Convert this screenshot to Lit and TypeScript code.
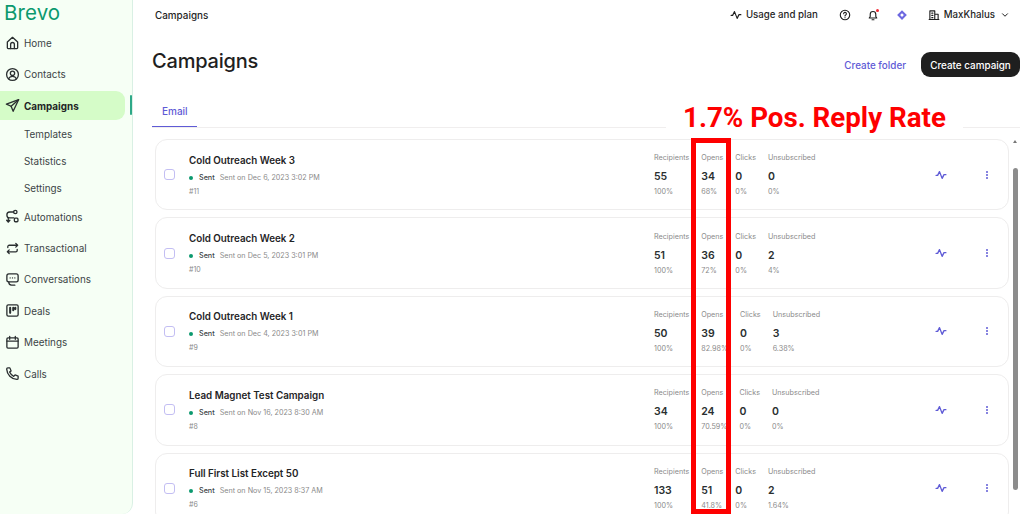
import {html, css, LitElement, svg} from 'lit';
import {customElement} from 'lit/decorators.js';

const NAV_ICONS = {
  home: svg`<path d="M2.500 7.500 8 2.500l5.500 5v6.200a.8.8 0 0 1-.8.8H3.300a.8.8 0 0 1-.8-.8z"/><path d="M6 14.500V10a2 2 0 0 1 4 0v4.500"/>`,
  contacts: svg`<circle cx="8" cy="8" r="6.300"/><circle cx="8" cy="6.600" r="2.300"/><path d="M3.800 12.600c.8-1.800 2.400-2.700 4.200-2.700s3.400.9 4.200 2.700"/>`,
  campaigns: svg`<path d="M14.500 1.800 1.500 6.600l5 2.200 2.200 5.400z"/><path d="M14.500 1.800 6.500 8.800"/>`,
  automations: svg`<circle cx="11" cy="3.200" r="1.800"/><rect x="10" y="9.800" width="3.800" height="3.800" rx="1"/><path d="M9.200 3.200H5a3.100 3.100 0 0 0-3 3.100c0 1.700 1.300 3.200 3 3.200h4.500"/><path d="M3.500 14V9.500M1.800 12 3.500 14l1.700-2"/>`,
  transactional: svg`<path d="M3 7V6a1.500 1.500 0 0 1 1.500-1.500h9M11.500 2.500l2 2-2 2"/><path d="M13 9v1a1.500 1.500 0 0 1-1.500 1.500h-9M4.500 9.500l-2 2 2 2"/>`,
  conversations: svg`<path d="M2 4a2 2 0 0 1 2-2h8a2 2 0 0 1 2 2v4.500a2 2 0 0 1-2 2H4a2 2 0 0 1-2-2z"/><path d="M4 10.500c0 2.200 1 3.500 3 3.500h3.500"/><path d="M5.500 6.300h.01M8 6.300h.01M10.500 6.300h.01"/>`,
  deals: svg`<rect x="2" y="2" width="12" height="12" rx="1.500"/><path d="M5.500 5v5.500M8.800 5v2.800M11 5v1.500" stroke-width="2.200"/>`,
  meetings: svg`<rect x="2" y="3" width="12" height="11" rx="1.200"/><path d="M2 6.500h12M5 1.500v3M11 1.500v3"/>`,
  calls: svg`<path d="M3 2h2.200l1.300 3.200-1.600 1.300c.8 1.900 2.300 3.400 4.400 4.500l1.400-1.600 3.300 1.400V13c0 .8-.6 1.300-1.400 1.300C6.700 14 2.200 9.300 1.800 3.300 1.800 2.600 2.300 2 3 2z"/>`,
};

type NavKey = keyof typeof NAV_ICONS;

const NAV: {label: string; icon: NavKey; active?: boolean; children?: string[]}[] = [
  {label: 'Home', icon: 'home'},
  {label: 'Contacts', icon: 'contacts'},
  {label: 'Campaigns', icon: 'campaigns', active: true, children: ['Templates', 'Statistics', 'Settings']},
  {label: 'Automations', icon: 'automations'},
  {label: 'Transactional', icon: 'transactional'},
  {label: 'Conversations', icon: 'conversations'},
  {label: 'Deals', icon: 'deals'},
  {label: 'Meetings', icon: 'meetings'},
  {label: 'Calls', icon: 'calls'},
];

const CAMPAIGNS = [
  {name: 'Cold Outreach Week 3', date: 'Sent on Dec 6, 2023 3:02 PM', id: '#11',
    stats: [['55', '100%'], ['34', '68%'], ['0', '0%'], ['0', '0%']]},
  {name: 'Cold Outreach Week 2', date: 'Sent on Dec 5, 2023 3:01 PM', id: '#10',
    stats: [['51', '100%'], ['36', '72%'], ['0', '0%'], ['2', '4%']]},
  {name: 'Cold Outreach Week 1', date: 'Sent on Dec 4, 2023 3:01 PM', id: '#9',
    stats: [['50', '100%'], ['39', '82.98%'], ['0', '0%'], ['3', '6.38%']]},
  {name: 'Lead Magnet Test Campaign', date: 'Sent on Nov 16, 2023 8:30 AM', id: '#8',
    stats: [['34', '100%'], ['24', '70.59%'], ['0', '0%'], ['0', '0%']]},
  {name: 'Full First List Except 50', date: 'Sent on Nov 15, 2023 8:37 AM', id: '#6',
    stats: [['133', '100%'], ['51', '41.8%'], ['0', '0%'], ['2', '1.64%']]},
];

const STAT_LABELS = ['Recipients', 'Opens', 'Clicks', 'Unsubscribed'];

const pulse = svg`<path d="M1.500 8.500h2L6 3.500l3.500 9 2.500-5h2.500"/>`;

@customElement('app-root')
export class AppRoot extends LitElement {
  static styles = css`
    :host {
      display: block;
      width: 1024px;
      height: 514px;
      overflow: hidden;
      position: relative;
      background: #fff;
      font-family: Inter, "Liberation Sans", sans-serif;
      color: #1f1f1f;
    }
    svg {
      display: block;
      fill: none;
      stroke: currentColor;
      stroke-linecap: round;
      stroke-linejoin: round;
    }
    .layout {
      display: flex;
      height: 514px;
    }

    /* sidebar */
    .sidebar {
      box-sizing: border-box;
      flex: 0 0 133px;
      height: 514px;
      background: #f6fff5;
      border-right: 1px solid #d9f0e4;
      border-bottom-right-radius: 11px;
      padding-right: 7px;
    }
    .logo {
      box-sizing: border-box;
      height: 27px;
      padding: 0 0 0 4px;
      font-size: 20.500px;
      line-height: 25px;
      letter-spacing: 0.1px;
      color: #0b996e;
    }
    .nav-row {
      position: relative;
      display: flex;
      align-items: center;
      gap: 4px;
      height: 31.400px;
      padding-left: 5px;
      font-size: 9.900px;
      color: #3c4446;
    }
    .nav-row svg {
      width: 15px;
      height: 15px;
      stroke-width: 1.400;
      color: #2a2f30;
    }
    .nav-row.active {
      background: #d5fcc8;
      border-radius: 0 9px 9px 0;
      font-weight: 700;
      color: #1f2426;
      height: 28.500px;
      margin: 1.500px 0 1.400px;
    }
    .nav-row.active::after {
      content: "";
      position: absolute;
      left: 130px;
      top: 4px;
      height: 20px;
      width: 2px;
      background: #2ea888;
      border-radius: 1px;
    }
    .nav-sub {
      display: flex;
      align-items: center;
      height: 26.600px;
      padding-left: 24px;
      font-size: 9.900px;
      color: #3c4446;
    }

    /* main column */
    .main {
      flex: 1;
      min-width: 0;
    }
    .topbar {
      display: flex;
      align-items: center;
      height: 29px;
      padding: 0 15px 0 22px;
      font-size: 9.700px;
      font-weight: 500;
    }
    .crumb {
      flex: 1;
      font-size: 9.900px;
    }
    .top-item {
      display: flex;
      align-items: center;
      gap: 4px;
    }
    .top-item svg {
      width: 12px;
      height: 12px;
      stroke-width: 1.500;
    }
    .usage { margin-right: 21px; }
    .help { margin-right: 16px; }
    .bell { margin-right: 17px; position: relative; }
    .gem { margin-right: 20px; }
    .bell::after {
      content: "";
      position: absolute;
      right: 0;
      top: 0;
      width: 3px;
      height: 3px;
      border-radius: 50%;
      background: #f02a35;
    }
    .top-item .chevron {
      width: 8px;
      height: 8px;
      margin-left: 2px;
      stroke-width: 2;
    }

    .title-row {
      display: flex;
      align-items: center;
      justify-content: space-between;
      height: 48px;
      padding: 0 4px 0 19px;
      margin-top: 11.500px;
    }
    h1 {
      margin: 0 0 7px;
      font-size: 20px;
      font-weight: 500;
      letter-spacing: -0.2px;
    }
    .title-actions {
      display: flex;
      align-items: center;
      gap: 15px;
    }
    .link {
      font-size: 9.900px;
      font-weight: 500;
      color: #5f5bd6;
    }
    .btn {
      display: flex;
      align-items: center;
      justify-content: center;
      box-sizing: border-box;
      width: 99px;
      height: 25px;
      border-radius: 9px;
      background: #1f1f1f;
      color: #fff;
      font-size: 9.900px;
      font-weight: 500;
    }

    .tabs {
      display: flex;
      margin: 2.500px 4px 0 19px;
      height: 36px;
      border-bottom: 1px solid #f0eeee;
    }
    .tab {
      box-sizing: border-box;
      width: 45px;
      height: 36px;
      line-height: 40px;
      padding-left: 10px;
      font-size: 10px;
      font-weight: 500;
      color: #5f5bd6;
      border-bottom: 1px solid #5f5bd6;
    }

    .list {
      display: flex;
      flex-direction: column;
      gap: 7px;
      width: 854px;
      margin: 11px 0 0 22px;
    }
    .card {
      display: flex;
      align-items: center;
      box-sizing: border-box;
      flex: 0 0 71.400px;
      border: 1px solid #eeeded;
      border-radius: 12px;
      background: #fff;
    }
    .check {
      box-sizing: border-box;
      flex: 0 0 11px;
      height: 11px;
      margin-left: 8px;
      border: 1.500px solid #c3bef3;
      border-radius: 3px;
    }
    .info {
      flex: 0 0 465px;
      margin-left: 14px;
      padding-top: 2px;
      box-sizing: border-box;
    }
    .name {
      font-size: 9.800px;
      font-weight: 600;
      line-height: 13px;
      color: #1f2426;
    }
    .status {
      display: flex;
      align-items: center;
      margin-top: 5px;
      font-size: 7.200px;
      line-height: 12px;
      color: #8a8a8a;
    }
    .dot {
      width: 4px;
      height: 4px;
      border-radius: 50%;
      background: #0b996e;
      margin-right: 6px;
    }
    .sent {
      color: #3c4446;
      font-weight: 500;
      margin-right: 5px;
    }
    .id {
      margin-top: 2px;
      font-size: 7px;
      line-height: 12px;
      color: #8a8a8a;
    }
    .stats {
      display: flex;
      gap: 12px;
      flex: 0 0 281px;
      box-sizing: border-box;
      padding-top: 1px;
    }
    .stat-label {
      font-size: 7.200px;
      line-height: 10px;
      color: #8a8a8a;
    }
    .stat-value {
      margin-top: 7px;
      font-size: 10.500px;
      font-weight: 600;
      line-height: 14px;
      color: #2a2f30;
    }
    .stat-pct {
      margin-top: 3px;
      font-size: 7.200px;
      line-height: 10px;
      color: #8a8a8a;
    }
    .action {
      color: #5f5bd6;
      stroke-width: 1.800;
      width: 12px;
      height: 12px;
    }
    .more {
      display: flex;
      flex-direction: column;
      gap: 1px;
      margin-left: 39px;
    }
    .more i {
      width: 2px;
      height: 2px;
      border-radius: 50%;
      background: #5f5bd6;
    }

    .scrollbar {
      position: absolute;
      left: 1013px;
      top: 168px;
      width: 5px;
      height: 322px;
      border-radius: 3px;
      background: #8c8c8c;
    }
    .scroll-up {
      position: absolute;
      left: 1013px;
      top: 140px;
      border: 2.500px solid transparent;
      border-top: 0;
      border-bottom: 3px solid #777;
    }

    /* red annotation pasted over the screenshot */
    .note {
      position: absolute;
      left: 666px;
      top: 100px;
      padding: 0 17px;
      height: 37px;
      background: #fff;
      font-family: Roboto, "Liberation Sans", sans-serif;
      font-size: 27.700px;
      font-weight: 700;
      line-height: 35px;
      white-space: nowrap;
      color: #fe0000;
    }
    .note-box {
      position: absolute;
      left: 691px;
      top: 138px;
      box-sizing: border-box;
      width: 39.500px;
      height: 376px;
      border: 5px solid #fe0000;
    }
  `;

  render() {
    return html`
      <div class="layout">
        <nav class="sidebar">
          <div class="logo">Brevo</div>
          ${NAV.map((item) => html`
            <div class="nav-row ${item.active ? 'active' : ''}">
              <svg viewBox="0 0 16 16">${NAV_ICONS[item.icon]}</svg>
              <span>${item.label}</span>
            </div>
            ${(item.children || []).map((c) => html`<div class="nav-sub">${c}</div>`)}
          `)}
        </nav>
        <div class="main">
          <header class="topbar">
            <span class="crumb">Campaigns</span>
            <div class="top-item usage">
              <svg viewBox="0 0 16 16">${pulse}</svg>
              <span>Usage and plan</span>
            </div>
            <div class="top-item help">
              <svg viewBox="0 0 16 16">
                <circle cx="8" cy="8" r="6.300"/>
                <path d="M6.200 6.300a1.800 1.800 0 1 1 2.700 1.600c-.6.300-.9.700-.9 1.300M8 11.500h.01"/>
              </svg>
            </div>
            <div class="top-item bell">
              <svg viewBox="0 0 16 16">
                <path d="M3 12h10l-1.300-2V7a3.700 3.700 0 0 0-7.400 0v3zM6.700 14.300h2.600"/>
              </svg>
            </div>
            <div class="top-item gem">
              <svg viewBox="0 0 16 16" style="stroke:none">
                <path d="M8 1.500 14.500 8 8 14.500 1.500 8zM8 5.500 5.500 8 8 10.500 10.500 8z" fill="#6d68e0" fill-rule="evenodd"/>
              </svg>
            </div>
            <div class="top-item">
              <svg viewBox="0 0 16 16">
                <path d="M2.500 14V2.500h6.500V14M9 7h4.500v7M1.500 14h13M5 5.500h1.500M5 8.500h1.500M5 11.500h1.500"/>
              </svg>
              <span>MaxKhalus</span>
              <svg class="chevron" viewBox="0 0 16 16"><path d="m3 5.500 5 5 5-5"/></svg>
            </div>
          </header>

          <div class="title-row">
            <h1>Campaigns</h1>
            <div class="title-actions">
              <span class="link">Create folder</span>
              <div class="btn">Create campaign</div>
            </div>
          </div>

          <div class="tabs"><div class="tab">Email</div></div>

          <div class="list">
            ${CAMPAIGNS.map((c) => html`
              <div class="card">
                <div class="check"></div>
                <div class="info">
                  <div class="name">${c.name}</div>
                  <div class="status">
                    <span class="dot"></span>
                    <span class="sent">Sent</span>
                    <span>${c.date}</span>
                  </div>
                  <div class="id">${c.id}</div>
                </div>
                <div class="stats">
                  ${c.stats.map((s, i) => html`
                    <div>
                      <div class="stat-label">${STAT_LABELS[i]}</div>
                      <div class="stat-value">${s[0]}</div>
                      <div class="stat-pct">${s[1]}</div>
                    </div>
                  `)}
                </div>
                <svg class="action" viewBox="0 0 16 16">${pulse}</svg>
                <div class="more"><i></i><i></i><i></i></div>
              </div>
            `)}
          </div>
        </div>
      </div>
      <div class="scroll-up"></div>
      <div class="scrollbar"></div>
      <div class="note">1.7% Pos. Reply Rate</div>
      <div class="note-box"></div>
    `;
  }
}
